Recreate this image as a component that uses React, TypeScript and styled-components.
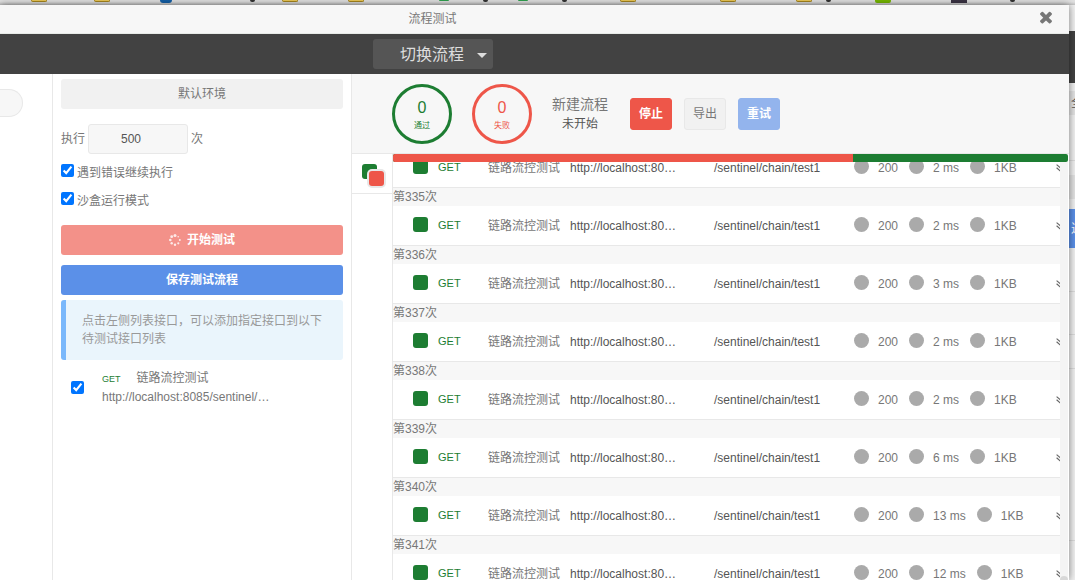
import React from "react";
import styled, { createGlobalStyle } from "styled-components";

const GlobalStyle = createGlobalStyle`
  * { box-sizing: border-box; }
  body {
    margin: 0;
    overflow: hidden;
    background: #fff;
    color: #777;
    font: 12px/18px "Liberation Sans", "Noto Sans CJK SC", sans-serif;
  }
  button, input { font: inherit; }
  svg { display: block; flex: none; }
`;

const Page = styled.div`
  display: flex;
  flex-direction: column;
  height: 100vh;
  overflow: hidden;
  background: #f0f0f0;
`;

const BookmarkBar = styled.div`
  flex: none;
  display: flex;
  align-items: flex-start;
  height: 5px;
  overflow: hidden;
  background: linear-gradient(#e2e2e2 40%, #c2c2c2);
`;

const Bookmark = styled.span<{ $gap: number; $kind: Kind }>`
  flex: none;
  margin-left: ${(p) => p.$gap}px;
  width: ${(p) => ({ folder: 16, globe: 12, leaf: 10, tail: 5, lime: 16, face: 16 })[p.$kind]}px;
  height: ${(p) => ({ folder: 2, globe: 3, leaf: 1, tail: 2, lime: 3, face: 3 })[p.$kind]}px;
  border: 0 solid #a8861c;
  border-width: ${(p) => (p.$kind === "folder" ? "0 1px 1px" : "0")};
  border-radius: ${(p) => (p.$kind === "face" ? "0" : p.$kind === "globe" ? "0 0 6px 6px" : "0 0 2px 2px")};
  background: ${(p) =>
    ({ folder: "#ecc958", globe: "#1560a8", leaf: "#2fa24f", tail: "#333", lime: "#76b900", face: "#3c3444" })[p.$kind]};
`;

const Shell = styled.div`
  flex: 1;
  min-height: 0;
  display: flex;
`;

const Modal = styled.main`
  flex: 1;
  min-width: 0;
  display: flex;
  flex-direction: column;
  background: #fff;
  z-index: 1;
  box-shadow: 0 0 8px rgba(0, 0, 0, 0.5);
`;

const TitleBar = styled.header`
  flex: none;
  display: flex;
  align-items: center;
  height: 29px;
  padding-right: 14px;
  background: #f7f7f7;
  border-bottom: 1px solid #e8ebe8;
`;

const Title = styled.h1`
  flex: 1;
  margin: 0;
  padding-right: 172px;
  text-align: center;
  font-size: 12px;
  font-weight: 400;
`;

const CloseButton = styled.button`
  padding: 0 0 4px;
  border: 0;
  background: none;
  color: #777;
`;

const FlowBar = styled.div`
  flex: none;
  display: flex;
  justify-content: center;
  align-items: center;
  height: 40px;
  padding-right: 203px;
  background: #424242;
`;

const FlowButton = styled.button`
  display: flex;
  align-items: center;
  justify-content: flex-end;
  gap: 13px;
  width: 120px;
  height: 30px;
  padding: 2px 6px 0 0;
  border: 0;
  border-radius: 3px;
  background: #555;
  color: #ddd;
  font-size: 16px;
`;

const Caret = styled.span`
  border: 5px solid transparent;
  border-top-color: #ddd;
  border-bottom: 0;
`;

const Body = styled.div`
  flex: 1;
  min-height: 0;
  display: flex;
`;

const Gutter = styled.div`
  flex: none;
  width: 53px;
  padding-top: 15px;
  border-right: 1px solid #e8e8e8;
`;

const SearchEnd = styled.div`
  width: 23px;
  height: 28px;
  border: 1px solid #e8e8e8;
  border-left: 0;
  border-radius: 0 14px 14px 0;
  background: #f7f7f7;
`;

const Settings = styled.section`
  flex: none;
  width: 299px;
  padding: 5px 8px;
  border-right: 1px solid #e8e8e8;
`;

const WideButton = styled.button<{ $tone: "plain" | "red" | "blue"; $after: number }>`
  display: flex;
  align-items: center;
  justify-content: center;
  gap: 6px;
  width: 100%;
  height: 30px;
  margin-bottom: ${(p) => p.$after}px;
  padding: 0;
  border: 0;
  border-radius: 3px;
  background: ${(p) => ({ plain: "#f1f1f1", red: "#f39189", blue: "#5b90e8" })[p.$tone]};
  color: ${(p) => (p.$tone === "plain" ? "#777" : "#fff")};
  font-weight: ${(p) => (p.$tone === "plain" ? 400 : 700)};
`;

const RunCount = styled.label`
  display: flex;
  align-items: center;
  gap: 3px;
  margin-bottom: 10px;
`;

const CountInput = styled.input`
  width: 100px;
  height: 30px;
  padding: 0 14px 0 0;
  border: 1px solid #e8e8e8;
  border-radius: 3px;
  background: #f7f7f7;
  color: #555;
  text-align: center;
`;

const Options = styled.div`
  display: flex;
  flex-direction: column;
  gap: 10px;
  margin-bottom: 15px;
`;

const Option = styled.label`
  display: flex;
  align-items: flex-start;
  gap: 3px;
`;

const Check = styled.input`
  flex: none;
  width: 13px;
  height: 13px;
  margin: 0;
`;

const Note = styled.p`
  margin: 0 0 8px;
  padding: 12px 16px;
  border-left: 5px solid #7ab8fb;
  border-radius: 3px;
  background: #eaf5fc;
  color: #999;
`;

const ApiItem = styled.label`
  display: flex;
  align-items: center;
  gap: 18px;
  padding-left: 10px;
`;

const ApiName = styled.span`
  display: flex;
  align-items: center;
  gap: 16px;
`;

const Method = styled.span<{ $small?: boolean }>`
  color: #1d7d32;
  font-size: ${(p) => (p.$small ? 9 : 11)}px;
  width: ${(p) => (p.$small ? "auto" : "50px")};
  padding: ${(p) => (p.$small ? "2px 0 0" : "0 0 2px")};
`;

const Results = styled.section`
  flex: 1;
  min-width: 0;
  display: flex;
  flex-direction: column;
`;

const Summary = styled.div`
  flex: none;
  display: flex;
  align-items: center;
  height: 80px;
  padding-left: 40px;
  background: #f7f7f7;
  border-bottom: 1px solid #e8e8e8;
`;

const Counter = styled.div<{ $color: string }>`
  display: flex;
  flex-direction: column;
  align-items: center;
  justify-content: center;
  width: 60px;
  height: 60px;
  margin-right: 20px;
  padding-top: 6px;
  border: 3px solid;
  border-radius: 50%;
  color: ${(p) => p.$color};
  font-size: 8px;
`;

const CounterValue = styled.span`
  font-size: 16px;
`;

const FlowState = styled.div`
  display: flex;
  flex-direction: column;
  align-items: center;
  margin-right: 22px;
  color: #555;
  line-height: 20px;
`;

const FlowName = styled.span`
  color: #777;
  font-size: 14px;
`;

const Action = styled.button<{ $tone: "red" | "plain" | "blue" }>`
  width: 42px;
  height: 32px;
  margin-right: 12px;
  padding: 0;
  border: 1px solid ${(p) => ({ red: "#ee5649", plain: "#e8e8e8", blue: "#93b4ed" })[p.$tone]};
  border-radius: 3px;
  background: ${(p) => ({ red: "#ee5649", plain: "#f1f1f1", blue: "#93b4ed" })[p.$tone]};
  color: ${(p) => (p.$tone === "plain" ? "#777" : "#fff")};
  font-weight: ${(p) => (p.$tone === "plain" ? 400 : 700)};
`;

const ResultBody = styled.div`
  flex: 1;
  min-height: 0;
  display: flex;
`;

const TabRail = styled.div`
  flex: none;
  width: 41px;
  border-right: 1px solid #e8e8e8;
`;

const TabButton = styled.button`
  display: block;
  width: 100%;
  height: 40px;
  padding: 2px 0 0 8px;
  border: 0;
  border-bottom: 1px solid #e8e8e8;
  background: none;
`;

const Log = styled.div`
  flex: 1;
  min-width: 0;
  display: flex;
  flex-direction: column;
  padding-right: 1px;
`;

const Progress = styled.div`
  flex: none;
  display: flex;
  height: 8px;
  border-radius: 2px;
  overflow: hidden;
  background: #1d7d32;
`;

const ProgressFill = styled.div`
  background: #ee5649;
`;

const Scroller = styled.div`
  flex: 1;
  min-height: 0;
  display: flex;
  overflow: hidden;
`;

const Runs = styled.div`
  flex: 1;
  min-width: 0;
  overflow: hidden;
  display: flex;
  flex-direction: column;
`;

const Run = styled.section`
  flex: none;
  &:first-child { margin-top: -14px; }
`;

const RunTitle = styled.h2`
  margin: 0;
  height: 18px;
  background: #f7f7f7;
  font-size: 12px;
  font-weight: 400;
`;

const RunRow = styled.div`
  display: flex;
  align-items: center;
  height: 40px;
  padding-left: 20px;
  border-bottom: 1px solid #e8e8e8;
  white-space: nowrap;
  overflow: hidden;
`;

const Passed = styled.span`
  flex: none;
  width: 15px;
  height: 15px;
  margin: 0 10px 2px 0;
  border-radius: 3px;
  background: #1d7d32;
`;

const ApiLabel = styled.span`
  flex: none;
  width: 82px;
`;

const Host = styled.span`
  flex: none;
  width: 144px;
  color: #555;
`;

const Path = styled.span`
  flex: none;
  width: 140px;
  color: #555;
`;

const Metric = styled.span`
  flex: none;
  display: flex;
  align-items: center;
  gap: 9px;
  margin-right: 11px;
`;

const Dot = styled.span`
  width: 15px;
  height: 15px;
  margin-bottom: 2px;
  border-radius: 50%;
  background: #aaa;
`;

const Expand = styled.button`
  flex: none;
  margin: 0 -5px 0 auto;
  padding: 0;
  border: 0;
  background: none;
`;

const Track = styled.div`
  flex: none;
  display: flex;
  flex-direction: column;
  justify-content: flex-end;
  width: 8px;
  background: #f4f4f4;
`;

const Thumb = styled.div`
  height: 4px;
  border-radius: 4px 4px 0 0;
  background: #d8d8d8;
`;

const Behind = styled.aside`
  flex: none;
  width: 6px;
  overflow: hidden;
  white-space: nowrap;
  background: #f2f2f2;
`;

const BehindPart = styled.div<{ $h: number; $bg?: string; $line?: boolean }>`
  display: flex;
  align-items: center;
  justify-content: flex-end;
  height: ${(p) => p.$h}px;
  background: ${(p) => p.$bg ?? "transparent"};
  border-bottom: ${(p) => (p.$line ? "1px solid #ddd" : "0")};
  color: ${(p) => (p.$bg === "#5b90e8" ? "#fff" : "#555")};
`;

const BehindText = styled.span`
  width: 4px;
`;

type Kind = "folder" | "globe" | "leaf" | "tail" | "lime" | "face";

const bookmarks: [Kind, number][] = [
  ["folder", 31], ["folder", 47], ["globe", 50], ["tail", 78], ["folder", 27], ["folder", 50],
  ["leaf", 75], ["tail", 34], ["leaf", 30], ["tail", 34], ["folder", 53], ["folder", 84],
  ["folder", 60], ["tail", 14], ["lime", 44], ["face", 60], ["tail", 43],
];

const topRunTime = "2 ms";

const runs = [
  { id: 335, time: "2 ms" },
  { id: 336, time: "3 ms" },
  { id: 337, time: "2 ms" },
  { id: 338, time: "2 ms" },
  { id: 339, time: "6 ms" },
  { id: 340, time: "13 ms" },
  { id: 341, time: "12 ms" },
];

const stopped = 460;
const total = 675;

const CloseIcon = () => (
  <svg width="18" height="18" viewBox="0 0 1792 1792" fill="currentColor" aria-hidden="true">
    <path d="M1490 1322q0 40-28 68l-136 136q-28 28-68 28t-68-28l-294-294-294 294q-28 28-68 28t-68-28l-136-136q-28-28-28-68t28-68l294-294-294-294q-28-28-28-68t28-68l136-136q28-28 68-28t68 28l294 294 294-294q28-28 68-28t68 28l136 136q28 28 28 68t-28 68l-294 294 294 294q28 28 28 68z" />
  </svg>
);

const SpinnerIcon = () => (
  <svg width="12" height="12" viewBox="0 0 12 12" fill="#fff" fillOpacity="0.8" aria-hidden="true">
    <circle cx="6" cy="1.5" r="1.5" />
    <circle cx="9.2" cy="2.8" r="0.8" />
    <circle cx="10.8" cy="6" r="1" />
    <circle cx="9.3" cy="9.3" r="1.1" />
    <circle cx="6" cy="10.7" r="1.2" />
    <circle cx="2.7" cy="9.3" r="1.2" />
    <circle cx="1.3" cy="6" r="1.3" />
    <circle cx="2.7" cy="2.7" r="1.4" />
  </svg>
);

const StackIcon = () => (
  <svg width="28" height="28" viewBox="0 0 28 28" aria-hidden="true">
    <rect x="2" y="3" width="15" height="15" rx="3" fill="#1d7d32" />
    <rect x="7" y="8" width="19" height="19" rx="5" fill="#e8e8e8" />
    <rect x="9" y="10" width="15" height="15" rx="3" fill="#ee5649" />
  </svg>
);

const DoubleDown = () => (
  <svg width="9" height="8" viewBox="0 0 9 8" fill="none" stroke="#666" strokeWidth="1.2" aria-hidden="true">
    <path d="M.6 .6 4.5 4 8.4 .6M.6 3.8 4.5 7.2 8.4 3.8" />
  </svg>
);

const ResultRow = ({ time }: { time: string }) => (
  <RunRow>
    <Passed />
    <Method>GET</Method>
    <ApiLabel>链路流控测试</ApiLabel>
    <Host>http://localhost:80…</Host>
    <Path>/sentinel/chain/test1</Path>
    {["200", time, "1KB"].map((value) => (
      <Metric key={value}>
        <Dot />
        {value}
      </Metric>
    ))}
    <Expand aria-label="展开">
      <DoubleDown />
    </Expand>
  </RunRow>
);

export default function App() {
  return (
    <>
      <GlobalStyle />
      <Page>
        <BookmarkBar>
          {bookmarks.map(([kind, gap], i) => (
            <Bookmark key={i} $kind={kind} $gap={gap} />
          ))}
        </BookmarkBar>
        <Shell>
          <Modal>
            <TitleBar>
              <Title>流程测试</Title>
              <CloseButton aria-label="关闭">
                <CloseIcon />
              </CloseButton>
            </TitleBar>
            <FlowBar>
              <FlowButton>
                切换流程
                <Caret />
              </FlowButton>
            </FlowBar>
            <Body>
              <Gutter>
                <SearchEnd />
              </Gutter>
              <Settings>
                <WideButton $tone="plain" $after={15}>默认环境</WideButton>
                <RunCount>
                  执行
                  <CountInput type="text" inputMode="numeric" defaultValue="500" />
                  次
                </RunCount>
                <Options>
                  <Option>
                    <Check type="checkbox" defaultChecked />
                    遇到错误继续执行
                  </Option>
                  <Option>
                    <Check type="checkbox" defaultChecked />
                    沙盒运行模式
                  </Option>
                </Options>
                <WideButton $tone="red" $after={10}>
                  <SpinnerIcon />
                  开始测试
                </WideButton>
                <WideButton $tone="blue" $after={5}>保存测试流程</WideButton>
                <Note>点击左侧列表接口，可以添加指定接口到以下待测试接口列表</Note>
                <ApiItem>
                  <Check type="checkbox" defaultChecked />
                  <span>
                    <ApiName>
                      <Method $small>GET</Method>
                      链路流控测试
                    </ApiName>
                    http://localhost:8085/sentinel/…
                  </span>
                </ApiItem>
              </Settings>
              <Results>
                <Summary>
                  <Counter $color="#1d7d32">
                    <CounterValue>0</CounterValue>
                    通过
                  </Counter>
                  <Counter $color="#ee5649">
                    <CounterValue>0</CounterValue>
                    失败
                  </Counter>
                  <FlowState>
                    <FlowName>新建流程</FlowName>
                    未开始
                  </FlowState>
                  <Action $tone="red">停止</Action>
                  <Action $tone="plain">导出</Action>
                  <Action $tone="blue">重试</Action>
                </Summary>
                <ResultBody>
                  <TabRail>
                    <TabButton aria-label="全部结果">
                      <StackIcon />
                    </TabButton>
                  </TabRail>
                  <Log>
                    <Progress>
                      <ProgressFill style={{ width: `${(stopped / total) * 100}%` }} />
                    </Progress>
                    <Scroller>
                      <Runs>
                        <Run>
                          <ResultRow time={topRunTime} />
                        </Run>
                        {runs.map((run) => (
                          <Run key={run.id}>
                            <RunTitle>第{run.id}次</RunTitle>
                            <ResultRow time={run.time} />
                          </Run>
                        ))}
                      </Runs>
                      <Track>
                        <Thumb />
                      </Track>
                    </Scroller>
                  </Log>
                </ResultBody>
              </Results>
            </Body>
          </Modal>
          <Behind>
            <BehindPart $h={26} />
            <BehindPart $h={52} $bg="#424242" />
            <BehindPart $h={8} />
            <BehindPart $h={24} $bg="#e4e4e4">
              <BehindText>全</BehindText>
            </BehindPart>
            <BehindPart $h={46} $line />
            <BehindPart $h={14} />
            <BehindPart $h={24} $bg="#e4e4e4" />
            <BehindPart $h={10} />
            <BehindPart $h={39} $bg="#5b90e8">
              <BehindText>过</BehindText>
            </BehindPart>
            <BehindPart $h={44} $line />
            <BehindPart $h={43} $line />
            <BehindPart $h={34} $line />
            <BehindPart $h={172} $line />
          </Behind>
        </Shell>
      </Page>
    </>
  );
}
